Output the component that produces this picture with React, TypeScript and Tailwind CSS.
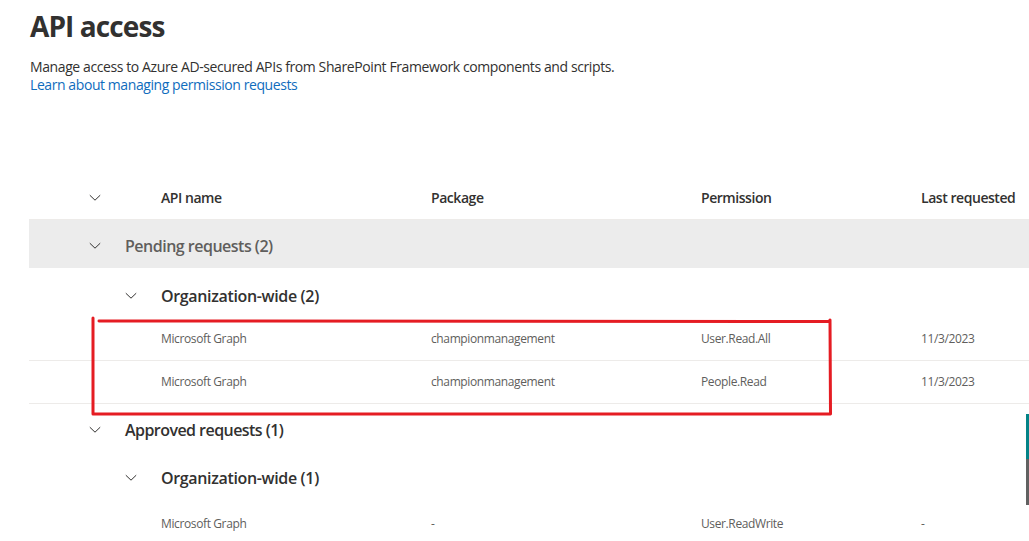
import React from "react";

const Chevron = () => (
  <svg width="12" height="8" viewBox="0 0 12 8" className="shrink-0">
    <path d="M0.8 1.2 L6 6.2 L11.2 1.2" fill="none" stroke="#323130" strokeWidth="1" />
  </svg>
);

type Row = { name: string; pkg: string; perm: string; last: string };

const DataRow = ({ r, border = true }: { r: Row; border?: boolean }) => (
  <div
    className={`grid grid-cols-[132px_270px_270px_220px_1fr] items-center h-[43px] text-[12px] tracking-[-0.38px] text-[#605e5c] ${
      border ? "border-b border-[#edebe9]" : ""
    }`}
  >
    <div />
    <div>{r.name}</div>
    <div>{r.pkg}</div>
    <div>{r.perm}</div>
    <div>{r.last}</div>
  </div>
);

export default function App() {
  return (
    <div
      className="relative w-[1029px] h-[541px] overflow-hidden bg-white text-[#323130]"
      style={{ fontFamily: "'Segoe UI', 'Open Sans', 'Noto Sans', sans-serif" }}
    >
      <div className="pl-[30px] pt-[6px]">
        <h1 className="text-[28px] leading-[40px] font-bold tracking-[-0.9px] text-[#323130]">API access</h1>
        <div className="mt-[11px] text-[14px] leading-[19px] tracking-[-0.4px]">
          Manage access to Azure AD-secured APIs from SharePoint Framework components and scripts.
        </div>
        <div className="text-[14px] leading-[18px] tracking-[-0.42px] text-[#0f6cbd]">
          Learn about managing permission requests
        </div>
      </div>

      <div className="ml-[29px] mt-[82px]">
        {/* header */}
        <div className="grid grid-cols-[132px_270px_270px_220px_1fr] items-center h-[44px] border-b border-[#edebe9] text-[14px] font-semibold tracking-[-0.45px] text-[#323130]">
          <div className="flex pl-[60px]">
            <Chevron />
          </div>
          <div>API name</div>
          <div>Package</div>
          <div>Permission</div>
          <div className="whitespace-nowrap">Last requested</div>
        </div>

        {/* pending */}
        <div className="flex items-center h-[48px] bg-[#ececec] pt-[3px]">
          <div className="w-[96px] flex pl-[60px]">
            <Chevron />
          </div>
          <div className="text-[16px] font-semibold tracking-[-0.5px] text-[#605e5c]">Pending requests (2)</div>
        </div>
        <div className="flex items-center h-[50px] pt-[6px]">
          <div className="w-[132px] flex pl-[96px]">
            <Chevron />
          </div>
          <div className="text-[16px] font-semibold tracking-[-0.35px]">Organization-wide (2)</div>
        </div>
        <DataRow r={{ name: "Microsoft Graph", pkg: "championmanagement", perm: "User.Read.All", last: "11/3/2023" }} />
        <DataRow r={{ name: "Microsoft Graph", pkg: "championmanagement", perm: "People.Read", last: "11/3/2023" }} />

        {/* approved */}
        <div className="flex items-center h-[50px] pt-[2px]">
          <div className="w-[96px] flex pl-[60px]">
            <Chevron />
          </div>
          <div className="text-[16px] font-semibold tracking-[-0.55px]">Approved requests (1)</div>
        </div>
        <div className="flex items-center h-[48px]">
          <div className="w-[132px] flex pl-[96px]">
            <Chevron />
          </div>
          <div className="text-[16px] font-semibold tracking-[-0.35px]">Organization-wide (1)</div>
        </div>
        <DataRow r={{ name: "Microsoft Graph", pkg: "-", perm: "User.ReadWrite", last: "-" }} border={false} />
      </div>

      {/* red annotation */}
      <svg className="absolute left-0 top-0 pointer-events-none" width="1029" height="541">
        <path
          d="M99 321 L829 321.5 L830 320 L830.5 414 L93 414 L93 318"
          fill="none"
          stroke="#e51c23"
          strokeWidth="3"
          strokeLinejoin="round"
          strokeLinecap="round"
        />
      </svg>

      {/* scroll indicator */}
      <div className="absolute right-0 top-[414px] w-[3px] h-[45px] bg-[#038387]" />
      <div className="absolute right-0 top-[459px] w-[3px] h-[46px] bg-[#616161]" />
    </div>
  );
}
